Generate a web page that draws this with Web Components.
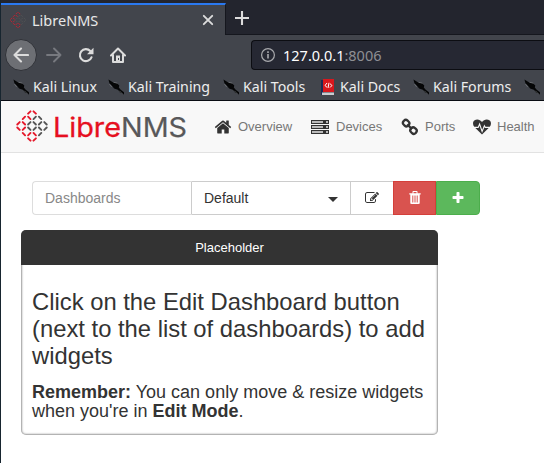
<!DOCTYPE html>
<html lang="en"><head><meta charset="utf-8"><title>LibreNMS</title>
<style>
html,body{margin:0;height:100%;overflow:hidden;background:#fff}
body{font-family:"Liberation Sans",Arial,sans-serif;color:#333}
</style></head><body>
<browser-window>
  <browser-tabs slot="chrome">LibreNMS</browser-tabs>
  <browser-toolbar slot="chrome" host="127.0.0.1" port=":8006"></browser-toolbar>
  <bookmark-bar slot="chrome">
    <bookmark-item style="width:95px">Kali Linux</bookmark-item>
    <bookmark-item style="width:115px">Kali Training</bookmark-item>
    <bookmark-item style="width:98px">Kali Tools</bookmark-item>
    <bookmark-item kind="docs" style="width:92px">Kali Docs</bookmark-item>
    <bookmark-item style="width:111px">Kali Forums</bookmark-item>
    <bookmark-item></bookmark-item>
  </bookmark-bar>
  <site-nav>
    <nav-item icon="home" style="width:96px">Overview</nav-item>
    <nav-item icon="server" style="width:91px">Devices</nav-item>
    <nav-item icon="link" style="width:71px">Ports</nav-item>
    <nav-item icon="heart">Health</nav-item>
  </site-nav>
  <dashboard-picker selected="Default">Dashboards</dashboard-picker>
  <dashboard-widget heading="Placeholder">
    <h3>Click on the Edit Dashboard button (next to the list of dashboards) to add widgets</h3>
    <h4><strong>Remember:</strong> You can only move &amp; resize widgets when you're in <strong>Edit Mode</strong>.</h4>
  </dashboard-widget>
</browser-window>
<script>
const define=(name,html)=>customElements.define(name,class extends HTMLElement{
  connectedCallback(){
    if(this.shadowRoot)return;
    this.attachShadow({mode:'open'}).innerHTML=typeof html==='function'?html(this):html;
  }
});

const icons={
home:['0 0 1792 1792','<path d="M1472 992v480q0 26-19 45t-45 19h-384v-384h-256v384h-384q-26 0-45-19t-19-45v-480q0-1 .5-3t.5-3l575-474 575 474q1 2 1 6zm223-69l-62 74q-8 9-21 11h-3q-13 0-21-7l-692-577-692 577q-12 8-24 7-13-2-21-11l-62-74q-8-10-7-23.500t11-21.500l719-599q32-26 76-26t76 26l244 204v-195q0-14 9-23t23-9h192q14 0 23 9t9 23v408l219 182q10 8 11 21.500t-7 23.500z"/>'],
server:['0 0 18 18','<path d="M0 2h18v4H0zM0 7h18v4H0zM0 12h18v4H0z"/><path fill="#bbb" d="M1 3h11v2H1zM1 8h11v2H1zM1 13h11v2H1zM15 3h2v2h-2zM15 8h2v2h-2zM15 13h2v2h-2z"/>'],
link:['0 0 18 18','<g fill="none" stroke="currentColor" stroke-width="2.300"><rect x="2" y="2.200" width="6.400" height="5.600" rx="2.600" transform="rotate(43 5 5)"/><rect x="9.300" y="9.800" width="6.400" height="5.600" rx="2.600" transform="rotate(43 12.500 12.600)"/><path d="M6.300 6.300l4.700 4.900"/></g>'],
heart:['0 0 18 18','<path d="M9 16.500L1.300 9C-.500 6.700-.300 4 1.300 2.600 3.600.600 7 1.200 9 4c2-2.800 5.400-3.400 7.700-1.400C18.300 4 18.500 6.700 16.700 9z"/><path d="M0 9.400h5.200L6.600 6l2.500 7.400 2.300-5.600.9 1.600H18" fill="none" stroke="#f8f8f8" stroke-width="1.100"/>'],
edit:['0 0 1792 1792','<path d="M888 1184l116-116-152-152-116 116v56h96v96h56zm440-720q-16-16-33 1l-350 350q-17 17-1 33t33-1l350-350q17-17 1-33zm80 594v190q0 119-84.500 203.500t-203.500 84.500h-832q-119 0-203.500-84.500t-84.500-203.500v-832q0-119 84.500-203.500t203.500-84.500h832q63 0 117 25 15 7 18 23 3 17-9 29l-49 49q-14 14-32 8-23-6-45-6h-832q-66 0-113 47t-47 113v832q0 66 47 113t113 47h832q66 0 113-47t47-113v-126q0-13 9-22l64-64q15-15 35-7t20 29zm-96-738l288 288-672 672h-288v-288zm444 132l-92 92-288-288 92-92q28-28 68-28t68 28l152 152q28 28 28 68t-28 68z"/>'],
trash:['0 0 14 14','<path fill-rule="evenodd" d="M4.500 2.200V.800Q4.500 0 5.300 0h3.400q.8 0 .8.800v1.400h3.200v1.300h-1v8.700Q11.700 13 10.400 13H3.600q-1.300 0-1.300-.8V3.500h-1V2.200zM5.500 1v1.200h3V1zM4.300 4.500v7h1v-7zM6.500 4.500v7h1v-7zM8.700 4.500v7h1v-7z"/>'],
plus:['0 0 1792 1792','<path d="M1600 736v192q0 40-28 68t-68 28h-416v416q0 40-28 68t-68 28h-192q-40 0-68-28t-28-68v-416h-416q-40 0-68-28t-28-68v-192q0-40 28-68t68-28h416v-416q0-40 28-68t68-28h192q40 0 68 28t28 68v416h416q40 0 68 28t28 68z"/>'],
back:['0 0 16 16','<path d="M15 8H1.500M8 1.500L1.500 8 8 14.500" fill="none" stroke="currentColor" stroke-width="2.100" stroke-linecap="round" stroke-linejoin="round"/>'],
forward:['0 0 16 16','<path d="M1 8h13.500M8 1.500L14.500 8 8 14.500" fill="none" stroke="currentColor" stroke-width="1.900" stroke-linecap="round" stroke-linejoin="round"/>'],
reload:['0 0 16 16','<path d="M13.500 10.300A6 6 0 1 1 12.300 4" fill="none" stroke="currentColor" stroke-width="2.100" stroke-linecap="round"/><path d="M15.500.700v6.600H9z"/>'],
house:['0 0 16 16','<path d="M1 8.500L8 1.500l7 7M3 8v7h10V8" fill="none" stroke="currentColor" stroke-width="2" stroke-linecap="round" stroke-linejoin="round"/><path d="M6 8.500h4V15H6z"/><path fill="#42454c" d="M8 11h1v2H8z"/>'],
info:['0 0 16 16','<circle cx="8" cy="8" r="6.400" fill="none" stroke="currentColor" stroke-width="1.200"/><path d="M7.200 7h1.600v4.600H7.200zM7.200 4.300h1.600V6H7.200z"/>'],
close:['0 0 16 16','<path d="M3.800 3.800l8.400 8.400M12.200 3.800l-8.400 8.400" stroke="currentColor" stroke-width="1.900" stroke-linecap="round"/>'],
add:['0 0 16 16','<path d="M8 1v14M1 8h14" stroke="currentColor" stroke-width="2.100"/>'],
dragon:['0 0 17 16','<path fill="#050607" d="M.500 0L6 3.600l3.500.4 2.500 2.500-.5 2 2 2.500 3.500 2.500V16l-4-2-2.500-3-4-1.500L4 6.500 1.500 4z"/><path d="M1.500 5l2.500 3M6 3l4 1M12 12l3.500 3.500" stroke="#85898d" stroke-width=".6" fill="none"/>'],
docs:['0 0 14 16','<path fill="#1c2b55" d="M0 1h3v15H0z"/><path fill="#d9171d" d="M2 0h11v13H2z"/><path fill="#c9ccd0" d="M1 13.500h12V16H1z"/><path d="M6 4L4 6.500l2 1.800M9 4.700l2 1.800-2 2M8 3.800L7 9" fill="none" stroke="#fff" stroke-width="1"/>']
};
define('svg-icon',el=>{const [box,body]=icons[el.getAttribute('name')];return `<style>:host{display:inline-flex;flex:none;width:16px;height:16px}svg{width:100%;height:100%;fill:currentColor;display:block}</style><svg viewBox="${box}">${body}</svg>`});

/* Diamond lattice of slanted dashes, one string of colours per row. */
define('libre-mark',()=>{
  const rows=['rr','rrgg','rrgggg','rrgggg','rrrg','rr'],colors={r:'#e5192b',g:'#555'};
  const dashes=rows.map((row,j)=>[...row].map((c,i)=>{
    const x=16+(i-(row.length-1)/2)*5.4,y=2.500+j*5.400,up=(i%2===0)===(j<3)?1:-1;
    return `<path stroke="${colors[c]}" d="M${x-1.2} ${y+1.2*up}l2.400 ${-2.4*up}"/>`;
  }).join('')).join('');
  return `<style>:host{display:block;flex:none;width:32px;height:32px}svg{display:block;width:100%;height:100%}</style><svg viewBox="0 0 32 32" fill="none" stroke-width="1.900" stroke-linecap="round">${dashes}</svg>`;
});

define('browser-window',`<style>
:host{display:flex;flex-direction:column;box-sizing:border-box;width:544px;height:463px;border-left:1px solid #17252f;background:#fff}
header{font-family:"Noto Sans",sans-serif;background:#42454c;border-bottom:1px solid #090c13;height:100px;display:flex;flex-direction:column}
</style><header><slot name="chrome"></slot></header><slot></slot>`);

define('browser-tabs',`<style>
:host{display:flex;height:35px;background:#23252e;color:#e8e8e8;box-sizing:border-box;border-bottom:1px solid #15171e}
.tab{box-sizing:border-box;width:225px;height:32px;margin-top:3px;border-top:2px solid #2a79f0;border-right:1px solid #15171e;background:#42454c;display:flex;align-items:center;padding:0 9px 1px 9px;font-size:14.500px;line-height:20px;flex:none}
libre-mark{width:16px;height:16px;margin-right:6px;opacity:.8}
span{flex:1}
.add{margin:10px 0 0 8px}
svg-icon{color:#dcdcdc}
</style><div class="tab"><libre-mark></libre-mark><span><slot></slot></span><svg-icon name="close"></svg-icon></div><svg-icon class="add" name="add"></svg-icon>`);

define('browser-toolbar',el=>`<style>
:host{display:flex;align-items:center;height:40px;color:#dcdcdc;padding-left:4px;box-sizing:border-box}
.back{box-sizing:border-box;width:32px;height:32px;border-radius:50%;background:#6d6f74;border:1px solid #303238;display:flex;align-items:center;justify-content:center;margin-right:9px}
.forward{color:#77797f;margin-right:16px}.reload{margin-right:16px}
.url{box-sizing:border-box;height:30px;flex:1;margin-left:125px;border:1px solid #0c0d12;border-right:0;border-radius:4px 0 0 4px;background:#262833;display:flex;align-items:center;padding-left:8px;font-size:14.500px;color:#fff}
.url svg-icon{color:#a8a9ad;margin-right:7px}.port{color:#8e8f94}
</style><div class="back"><svg-icon name="back"></svg-icon></div><svg-icon class="forward" name="forward"></svg-icon><svg-icon class="reload" name="reload"></svg-icon><svg-icon name="house"></svg-icon><div class="url"><svg-icon name="info"></svg-icon><span>${el.getAttribute('host')}</span><span class="port">${el.getAttribute('port')}</span></div>`);

define('bookmark-bar',`<style>:host{display:flex;height:24px;padding-left:12px;overflow:hidden}</style><slot></slot>`);
define('bookmark-item',el=>{const d=el.getAttribute('kind')==='docs';return `<style>
:host{display:flex;align-items:center;flex:none;color:#eee;font-size:14.200px;line-height:20px;white-space:nowrap}
svg-icon{margin-right:${d?5:4}px;width:${d?14:16}px}
</style><svg-icon name="${d?'docs':'dragon'}"></svg-icon><span><slot></slot></span>`});

define('site-nav',`<style>
:host{display:flex;align-items:center;box-sizing:border-box;height:52px;background:#f8f8f8;border-bottom:1px solid #e2e2e2;padding-left:15px;overflow:hidden;flex:none}
libre-mark{margin-bottom:1px}
.word{width:135px;height:28px;margin:0 26px 0 5px;display:block;flex:none;overflow:visible;font-family:Inter,sans-serif;font-size:26.500px;font-weight:400}
</style><libre-mark></libre-mark><svg class="word" viewBox="0 0 135 28"><text x="0" y="23.500" textLength="68" lengthAdjust="spacingAndGlyphs" fill="#e60f20" stroke="#e60f20" stroke-width=".3">Libre</text><text x="68" y="23.500" textLength="66" lengthAdjust="spacingAndGlyphs" fill="#58585a" stroke="#58585a" stroke-width=".2">NMS</text></svg><slot></slot>`);
define('nav-item',el=>`<style>
:host{display:flex;align-items:center;flex:none;color:#777;font-size:13px;line-height:20px}
svg-icon{color:#333;width:18px;height:18px;margin-right:${el.getAttribute('icon')==='server'?7:6}px}
:host([icon=server]) svg-icon,:host([icon=heart]) svg-icon{margin-left:1px}
:host{box-sizing:border-box}
</style><svg-icon name="${el.getAttribute('icon')}"></svg-icon><span><slot></slot></span>`);

define('dashboard-picker',el=>`<style>
:host{display:flex;margin:28px 0 0 31px;height:34px;font-size:14px;line-height:20px;flex:none}
div{box-sizing:border-box;border:1px solid #ccc;display:flex;align-items:center}
.label{width:160px;border-color:#ddd #ccc #ddd #ddd;border-radius:4px 0 0 4px;color:#888;padding-left:12px}
.select{width:159px;border-left:0;padding:0 12px;justify-content:space-between}
.select i{border:5px solid transparent;border-top-color:#333;border-bottom:0;margin-top:3px}
.b{width:43px;justify-content:center;border-left:0}
.edit{width:42px;border-right:0}
svg-icon{width:14px;height:14px}
.red{background:#d9534f;border:1px solid #d43f3a;color:#fff}
.green{background:#5cb85c;color:#fff;width:44px;border:1px solid #4cae4c;border-radius:0 4px 4px 0}
</style><div class="label"><slot></slot></div><div class="select"><span>${el.getAttribute('selected')}</span><i></i></div><div class="b edit"><svg-icon name="edit"></svg-icon></div><div class="b red"><svg-icon name="trash"></svg-icon></div><div class="b green"><svg-icon name="plus"></svg-icon></div>`);

define('dashboard-widget',el=>`<style>
:host{display:block;box-sizing:border-box;width:417px;height:205px;margin:15px 0 0 20px;border-radius:5px;background:#fff;box-shadow:inset 0 0 2px 1px #999;overflow:hidden;flex:none}
header{height:35px;background:#333;color:#fff;font-size:13px;line-height:35px;text-align:center}
section{padding:23px 8px 0 11px}
::slotted(h3){font-size:23.800px;line-height:27px;font-weight:400;margin:0 0 14px}
::slotted(h4){font-size:18px;line-height:19px;font-weight:400;margin:0}
</style><header>${el.getAttribute('heading')}</header><section><slot></slot></section>`);
</script>
</body></html>
